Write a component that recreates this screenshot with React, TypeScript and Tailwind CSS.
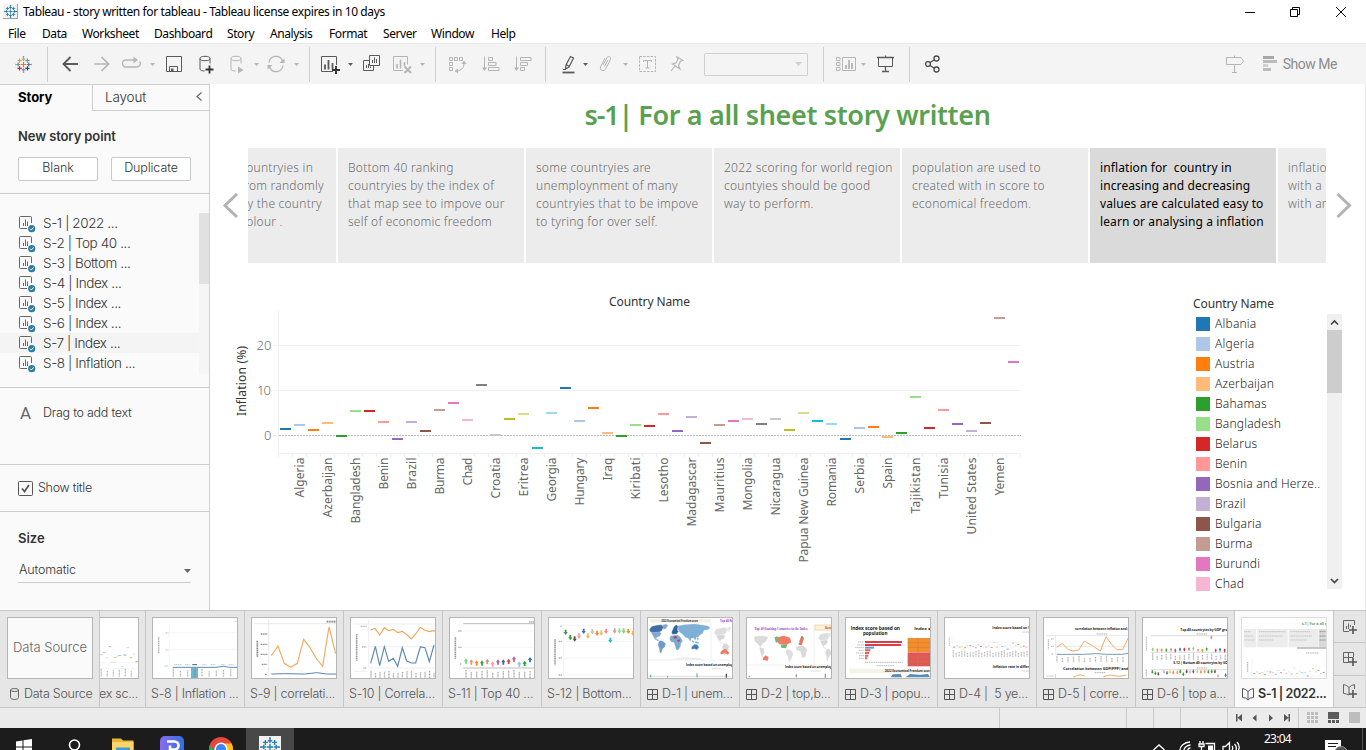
import React from "react";

type Kids = { children?: React.ReactNode };

const UI = "font-['Inter',sans-serif]";
const NOTO = "font-['Noto_Sans',sans-serif]";

const PALETTE = [
  "#1f77b4", "#aec7e8", "#ff7f0e", "#ffbb78", "#2ca02c", "#98df8a", "#d62728", "#ff9896", "#9467bd", "#c5b0d5",
  "#8c564b", "#c49c94", "#e377c2", "#f7b6d2", "#7f7f7f", "#c7c7c7", "#bcbd22", "#dbdb8d", "#17becf", "#9edae5",
];

/* ---------- title bar and menu ---------- */

function Sparkle({ size, colors }: { size: number; colors: string[] }) {
  const pts: [number, number, number][] = [
    [8, 8, 2.6], [8, 3, 1.8], [8, 13, 1.8], [3, 8, 1.8], [13, 8, 1.8],
    [4.3, 4.3, 2], [11.7, 4.3, 2], [4.3, 11.7, 2], [11.7, 11.7, 2],
    [8, 0.8, 0.7], [8, 15.2, 0.7], [0.8, 8, 0.7], [15.2, 8, 0.7],
  ];
  return (
    <svg width={size} height={size} viewBox="0 0 16 16" className="shrink-0">
      {pts.map(([x, y, r], i) => (
        <path key={i} d={`M${x - r} ${y}h${r * 2}M${x} ${y - r}v${r * 2}`} stroke={colors[i % colors.length]} strokeWidth="1.1" />
      ))}
    </svg>
  );
}

function TitleBar() {
  return (
    <div className="flex h-[23px] shrink-0 items-center bg-white">
      <div className="ml-[3px] flex h-[15px] w-[15px] items-center justify-center border-r border-b border-gray-400 bg-[#f2f2f2]">
        <Sparkle size={13} colors={["#2f7fb0"]} />
      </div>
      <span className={`${NOTO} ml-[5px] whitespace-pre text-[12px] tracking-[-0.39px] text-black`}>
        Tableau - story written for tableau - Tableau license expires in 10 days
      </span>
      <svg className="ml-auto mr-[18px]" width="104" height="14" viewBox="0 0 104 14" fill="none" stroke="#000">
        <path d="M1 7.500h10M46.500 4.500h7v7h-7zM48.500 4.500v-2h7v7h-2M92 2l10 10M102 2l-10 10" />
      </svg>
    </div>
  );
}

function MenuBar() {
  const item = "shrink-0";
  return (
    <div className={`${NOTO} flex h-5 shrink-0 items-center bg-white pt-[2px] text-[12px] tracking-[-0.42px] text-black`}>
      <span className={`${item} ml-2 w-[34px]`}>File</span>
      <span className={`${item} w-[40px]`}>Data</span>
      <span className={`${item} w-[72px]`}>Worksheet</span>
      <span className={`${item} w-[73px]`}>Dashboard</span>
      <span className={`${item} w-[43px]`}>Story</span>
      <span className={`${item} w-[59px]`}>Analysis</span>
      <span className={`${item} w-[54px]`}>Format</span>
      <span className={`${item} w-[48px]`}>Server</span>
      <span className={`${item} w-[60px]`}>Window</span>
      <span className={item}>Help</span>
    </div>
  );
}

/* ---------- toolbar ---------- */

function Tool({ w, className, color = "#b5b5b5", children }: Kids & { w: number; className: string; color?: string }) {
  return (
    <svg width={w} height="24" viewBox={`0 0 ${w} 24`} fill="none" stroke={color} strokeWidth="1" className={`shrink-0 ${className}`}>
      {children}
    </svg>
  );
}

function Caret({ className, color = "#b5b5b5" }: { className: string; color?: string }) {
  return (
    <svg width="5" height="3" viewBox="0 0 5 3" className={`shrink-0 ${className}`}>
      <path d="M0 0h5L2.500 3z" fill={color} />
    </svg>
  );
}

function Sep({ className }: { className: string }) {
  return <div className={`h-[35px] w-px shrink-0 bg-[#cfcfcf] ${className}`} />;
}

function Toolbar() {
  const dark = "#5a5a5a";
  return (
    <div className="flex h-[41px] shrink-0 items-center border-t border-[#ebebeb] bg-[#f4f4f4]">
      <div className="ml-[15px]">
        <Sparkle size={17} colors={["#e8762c", "#b9a98a", "#8b8bb8", "#5b9bb0", "#5c6f9c", "#e8a33d", "#6b9fb0", "#c72037", "#1f447e", "#5b9bb0", "#8aa0b8", "#77bbaa", "#7b9bb8"]} />
      </div>
      <Sep className="ml-[15px]" />
      <Tool w={16} className="ml-[14px]" color={dark}>
        <path d="M8.500 5L1.500 12l7 7M1.500 12H16" strokeWidth="1.9" />
      </Tool>
      <Tool w={16} className="ml-[16px]">
        <path d="M7.500 5l7 7-7 7M0 12h14.500" strokeWidth="1.7" />
      </Tool>
      <Tool w={19} className="ml-[12px]">
        <path d="M12.500 8H4a3.300 3.300 0 0 0 0 7h11a3.300 3.300 0 0 0 2.500-5.500" strokeWidth="1.300" />
        <path d="M11.500 4.500l4.500 3.500-4.500 3.500z" fill="#b5b5b5" stroke="none" />
      </Tool>
      <Caret className="ml-[9px]" />
      <Tool w={16} className="ml-[11px]" color={dark}>
        <path d="M.5 4.500h15v15H.5zM3.500 19.500v-5h8v5" />
        <path d="M5 16.500h2.500V20H5z" fill={dark} stroke="none" />
      </Tool>
      <Tool w={15} className="ml-[17px]" color={dark}>
        <ellipse cx="6" cy="6.500" rx="5" ry="2.200" />
        <path d="M1 6.500V17c0 1.400 2 2 4.500 2M11 6.500v5" />
        <path d="M10.500 13.500v8M6.500 17.500h8" stroke="#333" strokeWidth="1.800" />
      </Tool>
      <Tool w={14} className="ml-[16px]">
        <ellipse cx="6" cy="6.500" rx="5" ry="2.200" />
        <path d="M1 6.500V17c0 1.400 2 2 4.500 2M11 6.500v5" />
        <path d="M8 14.500l5.500 3.500L8 21.500z" fill="#b5b5b5" stroke="none" />
      </Tool>
      <Caret className="ml-[10px]" />
      <Tool w={18} className="ml-[8px]">
        <path d="M2 10.500a7 7 0 0 1 13.500-1.500M16 13.500a7 7 0 0 1-13.500 1.500" strokeWidth="1.300" />
        <path d="M17.500 6.500v4.500H12.500zM.5 17.500V13H5.500z" fill="#b5b5b5" stroke="none" />
      </Tool>
      <Caret className="ml-[9px]" />
      <Sep className="ml-[10px]" />
      <Tool w={20} className="ml-[11px]" color={dark}>
        <path d="M15.500 13V4.500H.5v15H12" />
        <path d="M4 12.500v5M7.500 8v9.500M11.500 11v6.500" strokeWidth="1.800" />
        <path d="M15 14v8M11 18h8" stroke="#333" strokeWidth="1.900" />
      </Tool>
      <Caret className="ml-[7px]" color={dark} />
      <Tool w={18} className="ml-[10px]" color={dark}>
        <path d="M6.500 3.500h10v10h-10zM6.500 8.500h-6v10h10v-5" />
        <path d="M9.500 8v3M11.500 5.500V11M13.500 7v4M3.500 13v3M5.500 12v4M7.500 14.500V16" />
      </Tool>
      <Tool w={19} className="ml-[12px]">
        <path d="M14.500 12.500V4.500H.5v14H10" />
        <path d="M4 12v4.500M7.500 7.500v9M11.500 10v4" strokeWidth="1.600" />
        <path d="M11.500 14.500l6.500 6.500M18 14.500L11.500 21" strokeWidth="1.900" />
      </Tool>
      <Caret className="ml-[8px]" />
      <Sep className="ml-[10px]" />
      <Tool w={18} className="ml-[13px]">
        <path d="M.5 5.500h3v3h-3zM5.500 5.500h3v3h-3zM10.500 5.500h3v3h-3zM.5 10.500h3v3h-3zM.5 15.500h3v3h-3zM15 11.500c0 4-2.500 7-7 7.500" />
        <path d="M15 8.500l2.500 3.500h-5zM5.500 19l3.500-2.500v5z" fill="#b5b5b5" stroke="none" />
      </Tool>
      <Tool w={19} className="ml-[14px]">
        <path d="M3.500 4.500V17M7.500 5.500h4v3h-4zM7.500 10.500h7.500v3H7.500zM7.500 15.500h10.500v3H7.500z" />
        <path d="M1 15.500h5L3.500 19z" fill="#b5b5b5" stroke="none" />
      </Tool>
      <Tool w={19} className="ml-[13px]">
        <path d="M3.500 4.500V17M7.500 5.500h10.500v3H7.500zM7.500 10.500h7v3h-7zM7.500 15.500h4v3h-4z" />
        <path d="M1 15.500h5L3.500 19z" fill="#b5b5b5" stroke="none" />
      </Tool>
      <Sep className="ml-[13px]" />
      <Tool w={13} className="ml-[16px]" color={dark}>
        <path d="M8.500 4.500l3 1.500-4.500 9-3.500 2 .500-4zM4 12.500l3.500 2M1 17.500h3" strokeWidth="1.200" />
        <path d="M.5 20.500h12" strokeWidth="1.800" />
      </Tool>
      <Caret className="ml-[8px]" color={dark} />
      <Tool w={13} className="ml-[11px]">
        <path d="M4 13l4-7.500c1.500-2 4.500-.5 3.500 2l-5 9.500c-1.500 3-6 1.500-5-2l4.500-9M5.500 14.500L9 8" />
      </Tool>
      <Caret className="ml-[11px]" />
      <Tool w={17} className="ml-[11px]">
        <path d="M.5 4.500h16v15H.5z" strokeDasharray="2.500 1.200" />
        <path d="M4.500 10V8.500h8V10M8.500 8.500v7.500M6.500 16h4" />
      </Tool>
      <Tool w={14} className="ml-[14px]">
        <path d="M6.500 4.500l6.500 4-2.500.5-2 4.500 1.500 3.500-7.500-5 3.500-1 2-4zM5 14l-4 5" strokeWidth="1.100" />
      </Tool>
      <div className="ml-[20px] flex h-[23px] w-[104px] shrink-0 items-center justify-end rounded-xs border border-[#d0d0d0] pr-[5px]">
        <svg width="7" height="4" viewBox="0 0 7 4"><path d="M0 0h7L3.500 4z" fill="#cfcfcf" /></svg>
      </div>
      <Sep className="ml-[15px]" />
      <Tool w={20} className="ml-[12px]">
        <path d="M.5 5.500h3.500v3H.5zM.5 10.500h3.500v3H.5zM.5 15.500h3.500v3H.5zM6.500 5.500h13v13h-13z" />
        <path d="M10 13v4M13 8v9M16 11v6" strokeWidth="1.800" />
      </Tool>
      <Caret className="ml-[5px]" />
      <Tool w={17} className="ml-[11px]" color={dark}>
        <path d="M0 5.500h17M8.500 3.500v2M8.500 14.500v5M5 19.500h7" strokeWidth="1.300" />
        <path d="M1.500 5.500v9h14v-9" />
      </Tool>
      <Sep className="ml-[15px]" />
      <Tool w={15} className="ml-[15px]" color="#4a4a4a">
        <circle cx="11.500" cy="6.500" r="2.500" strokeWidth="1.300" />
        <circle cx="3" cy="12" r="2.400" strokeWidth="1.300" />
        <circle cx="11.500" cy="17.500" r="2.500" strokeWidth="1.300" />
        <path d="M5 10.500l4.500-2.800M5 13.500l4.500 2.800" strokeWidth="1.300" />
      </Tool>
      <Tool w={18} className="ml-auto">
        <path d="M.5 5.500H15l2.500 3.500L15 12.500H.5zM8.500 3.500v2M8.500 12.500v8M6 20.500h5" />
      </Tool>
      <Tool w={14} className="ml-[19px]">
        <path d="M0 5.500h11" stroke="#a8a8a8" strokeWidth="3" />
        <path d="M0 9.500h14M0 17.500h8" stroke="#bbb" strokeWidth="3" />
        <path d="M0 13.500h5" stroke="#d0d0d0" strokeWidth="3" />
      </Tool>
      <span className="mr-[29px] ml-[6px] whitespace-nowrap font-['Roboto',sans-serif] text-[14px] tracking-[-0.48px] text-[#8c8c8c]">Show Me</span>
    </div>
  );
}

/* ---------- story side panel ---------- */

function SheetIcon() {
  return (
    <svg width="17" height="17" viewBox="0 0 17 17" fill="none" stroke="#666" className="mt-[2px] shrink-0">
      <path d="M12.500 7V1.500a1 1 0 0 0-1-1h-10a1 1 0 0 0-1 1v10a1 1 0 0 0 1 1H8M4.500 7v3M6.500 3.500V10M8.500 5.500V10" />
      <circle cx="12.700" cy="12.700" r="3.600" fill="#2f7da3" stroke="none" />
      <path d="M11 12.700l1.300 1.300 2.200-2.500" stroke="#fff" />
    </svg>
  );
}

const SHEETS = ["S-1 | 2022 ...", "S-2 | Top 40 ...", "S-3 | Bottom ...", "S-4 | Index ...", "S-5 | Index ...", "S-6 | Index ...", "S-7 | Index ...", "S-8 | Inflation ..."];

function SidePanel() {
  return (
    <aside className={`${UI} flex w-[210px] shrink-0 flex-col border-t border-r border-[#d0d0d0] bg-[#fafafa] text-[#333]`}>
      <div className="flex h-[26px] shrink-0">
        <div className="w-[92px] pt-[3px] pl-[18px] text-[13px] font-bold text-black">Story</div>
        <div className="flex flex-1 justify-between border-b border-l border-[#cfcfcf] pt-[3px] pr-[7px] pl-[12px] text-[13.500px] leading-[19px] font-light tracking-[-0.15px]">
          Layout
          <svg width="6" height="9" viewBox="0 0 6 9" className="mt-[4px]"><path d="M5.500.5l-4.500 4 4.500 4" fill="none" stroke="#666" strokeWidth="1.200" /></svg>
        </div>
      </div>
      <div className="h-[83px] shrink-0 border-b border-[#cdcdcd] pl-[18px]">
        <div className="mt-[15px] text-[13px] leading-5 font-semibold tracking-[-0.1px]">New story point</div>
        <div className="mt-[11px] flex gap-[13px]">
          <div className="flex h-6 w-[80px] items-center justify-center rounded-xs border border-[#c9c9c9] bg-white pb-px text-[12.500px] font-light tracking-[-0.1px]">Blank</div>
          <div className="flex h-6 w-[80px] items-center justify-center rounded-xs border border-[#c9c9c9] bg-white pb-px text-[12.500px] font-light tracking-[-0.1px]">Duplicate</div>
        </div>
      </div>
      <div className="flex h-[194px] shrink-0 border-b border-[#cdcdcd] pt-[19px]">
        <div className="flex-1">
          {SHEETS.map((s, i) => (
            <div key={s} className={`flex h-5 items-center pl-[19px] text-[13.500px] font-light tracking-[-0.4px] ${i === 6 ? "bg-[#f4f4f4]" : ""}`}>
              <SheetIcon />
              <span className="ml-[7px] whitespace-nowrap">{s}</span>
            </div>
          ))}
        </div>
        <div className="h-[161px] w-[10px] bg-[#f5f5f5]">
          <div className="h-[71px] bg-[#e1e1e1]" />
        </div>
      </div>
      <div className="flex h-[77px] shrink-0 border-b border-[#cdcdcd] pt-[15px] pl-[20px] text-[12.500px] leading-5 font-light tracking-[-0.25px]">
        <span className="w-[23px] font-['Roboto',sans-serif] text-[17px] font-normal text-[#666]">A</span>
        Drag to add text
      </div>
      <div className="flex h-[47px] shrink-0 items-center border-b border-[#cdcdcd] pl-[18px] text-[12.500px] font-light tracking-[-0.28px]">
        <svg width="15" height="15" viewBox="0 0 15 15" fill="none" stroke="#555" className="mr-[5px]">
          <rect x=".5" y=".5" width="14" height="14" rx="1" />
          <path d="M4 7.500l2.500 3L11 4" strokeWidth="1.700" />
        </svg>
        Show title
      </div>
      <div className="pt-[16px] pl-[18px]">
        <div className="text-[13px] leading-5 font-semibold">Size</div>
        <div className="mt-[11px] flex h-[24px] w-[173px] items-center justify-between border-b border-[#cdcdcd] pl-px text-[12.500px] font-light tracking-[-0.15px]">
          Automatic
          <svg width="7" height="4" viewBox="0 0 7 4"><path d="M0 0h7L3.500 4z" fill="#666" /></svg>
        </div>
      </div>
    </aside>
  );
}

/* ---------- story points ---------- */

const POINTS = [
  "Bottom 40 ranking\ncountryies by the index of\nthat map see to impove our\nself of economic freedom",
  "some countryies are\nunemploynment of many\ncountryies that to be impove\nto tyring for over self.",
  "2022 scoring for world region\ncountyies should be good\nway to perform.",
  "population are used to\ncreated with in score to\neconomical freedom.",
  "inflation for  country in\nincreasing and decreasing\nvalues are calculated easy to\nlearn or analysing a inflation",
];

function StoryPoints() {
  return (
    <div className="flex h-[115px] shrink-0 items-center">
      <svg width="38" height="26" viewBox="0 0 38 26" className="shrink-0"><path d="M27 1L15 12.500 27 24" fill="none" stroke="#b3b3b3" strokeWidth="3" /></svg>
      <div className={`${NOTO} flex h-full w-[1078px] gap-[2px] overflow-hidden whitespace-pre text-[12px] leading-[18px] font-light tracking-[0.24px] text-[#6c6c6c]`}>
        <div className="flex w-[88px] shrink-0 justify-end overflow-hidden bg-[#ececec] pt-[11px] pr-[12px]">
          <div>{"countryies in\nfrom randomly\nby the country\ncolour ."}</div>
        </div>
        {POINTS.map((p, i) => (
          <div key={i} className={`w-[186px] shrink-0 pt-[11px] pl-[10px] ${i === 4 ? "bg-[#dadada] font-normal tracking-[0.1px] text-black" : "bg-[#ececec]"}`}>{p}</div>
        ))}
        <div className="w-[48px] shrink-0 overflow-hidden bg-[#ececec] pt-[11px] pl-[10px]">{"inflation\nwith a\nwith any"}</div>
      </div>
      <svg width="38" height="26" viewBox="0 0 38 26" className="shrink-0"><path d="M11.500 1l12 11.500L11.500 24" fill="none" stroke="#b3b3b3" strokeWidth="3" /></svg>
    </div>
  );
}

/* ---------- inflation chart: mark heights in pixels below the panel top ---------- */

const MARKS = [
  144, 140, 145, 138, 151, 126, 126, 137, 154, 137, 146, 125, 118, 135, 100, 150, 134, 129, 163, 128, 103, 136, 123, 148, 151, 140, 141,
  129, 146, 132, 158, 140, 136, 134, 139, 134, 145, 128, 136, 139, 154, 143, 142, 152, 148, 112, 143, 125, 139, 146, 138, 33, 77,
];

const LABELS: [string, number][] = [
  ["Algeria", 40], ["Azerbaijan", 60], ["Bangladesh", 66], ["Benin", 32], ["Brazil", 32], ["Burma", 37], ["Chad", 28], ["Croatia", 41],
  ["Eritrea", 39], ["Georgia", 44], ["Hungary", 48], ["Iraq", 23], ["Kiribati", 42], ["Lesotho", 45], ["Madagascar", 69], ["Mauritius", 55],
  ["Mongolia", 53], ["Nicaragua", 58], ["Papua New Guinea", 105], ["Romania", 49], ["Serbia", 36], ["Spain", 31], ["Tajikistan", 56],
  ["Tunisia", 41], ["United States", 77], ["Yemen", 38],
];

function InflationChart() {
  return (
    <svg width="830" height="320" viewBox="210 0 830 320" className={`${NOTO} shrink-0`} fontSize="12">
      <text x="609" y="21" textLength="81" fontSize="12" fill="#333">Country Name</text>
      <text transform="translate(246 131) rotate(-90)" textLength="70" fill="#333">Inflation (%)</text>
      <g stroke="#f0f0f0">
        <path d="M278.500 26v145M273 60.500h748M273 105.500h748M273 150.500h5M278 168.500h743" />
        <path d={Array.from({ length: 54 }, (_, i) => `M${278.5 + 14 * i} 168v4`).join("")} />
      </g>
      <path d="M279 150.500h742" stroke="#bbb" strokeDasharray="2 1" />
      <g fill="#6c6c6c" fontWeight="300" fontSize="13">
        <text x="256.500" y="65" textLength="15">20</text>
        <text x="257" y="110" textLength="14">10</text>
        <text x="264" y="155">0</text>
      </g>
      {MARKS.map((y, i) => (
        <rect key={i} x={280 + 14 * i} y={y - 1} width="11" height="2" fill={PALETTE[i % 20]} />
      ))}
      <g fill="#666" fontSize="12">
        {LABELS.map(([name, len], i) => (
          <text key={name} transform={`translate(${303.5 + 28 * i} ${172.5 + len}) rotate(-90)`} textLength={len}>{name}</text>
        ))}
      </g>
    </svg>
  );
}

const LEGEND = ["Albania", "Algeria", "Austria", "Azerbaijan", "Bahamas", "Bangladesh", "Belarus", "Benin", "Bosnia and Herze..", "Brazil", "Bulgaria", "Burma", "Burundi", "Chad"];

function Legend() {
  return (
    <div className={`${NOTO} mt-[9px] ml-[153px] w-[149px] shrink-0`}>
      <div className="text-[12px] leading-5 tracking-[-0.1px] text-[#333]">Country Name</div>
      <div className="flex">
        <div className="w-[134px] pl-[3px]">
          {LEGEND.map((n, i) => (
            <div key={n} className="flex h-5 items-center gap-[5px] text-[12px] font-light tracking-[0.2px] whitespace-nowrap text-[#222]">
              <span className="h-[14px] w-[14px] shrink-0" style={{ background: PALETTE[i] }} />
              {n}
            </div>
          ))}
        </div>
        <div className="flex h-[275px] w-[15px] flex-col bg-[#f0f0f0]">
          <svg width="15" height="16" viewBox="0 0 15 16"><path d="M4 10.500L7.500 7l3.500 3.500" fill="none" stroke="#444" strokeWidth="1.700" /></svg>
          <div className="h-[63px] bg-[#cdcdcd]" />
          <svg width="15" height="16" viewBox="0 0 15 16" className="mt-auto"><path d="M4 6l3.500 3.500L11 6" fill="none" stroke="#444" strokeWidth="1.700" /></svg>
        </div>
      </div>
    </div>
  );
}

/* ---------- sheet thumbnails ---------- */

function Thumb({ x, w = 84, active = false, children }: Kids & { x: number; w?: number; active?: boolean }) {
  return (
    <div className={`h-[62px] shrink-0 overflow-hidden border-y border-r bg-white ${w === 84 ? "border-l" : ""} ${active ? "border-[#ddd]" : "border-[#b5b5b5]"}`}>
      <svg width={w} height="60" viewBox={`${x} 40 ${w * 3} 180`} fill="none" className="font-['Open_Sans',sans-serif] font-bold">{children}</svg>
    </div>
  );
}

function VTicks({ from, to, step, y, h = 24, color = "#999" }: { from: number; to: number; step: number; y: number; h?: number; color?: string }) {
  const n = Math.floor((to - from) / step) + 1;
  return (
    <g stroke={color} strokeWidth="4" strokeDasharray="3 1.500" opacity=".5">
      {Array.from({ length: n }, (_, i) => (
        <path key={i} d={`M${from + i * step} ${y + ((i * 7) % 9)}v${h - ((i * 7) % 9)}`} />
      ))}
    </g>
  );
}

/* a word too small to read, drawn as a dashed line */
function Smudge({ d, color = "#999", w = 4 }: { d: string; color?: string; w?: number }) {
  return <path d={d} stroke={color} strokeWidth={w} strokeDasharray="4 1.500" opacity=".6" />;
}

function Dashes({ pts, w = 7, off = 0 }: { pts: [number, number][]; w?: number; off?: number }) {
  return (
    <g>
      {pts.map(([x, y], i) => (
        <rect key={i} x={x} y={y} width={w} height="2.5" fill={PALETTE[(i + off) % 20]} opacity=".7" />
      ))}
    </g>
  );
}

function Arrows({ pts, down = false, colors, k = 0.9 }: { pts: [number, number][]; down?: boolean; colors: string[]; k?: number }) {
  const d = down ? "M-3-9h6v8h4L0 9-7-1h4z" : "M-3 9h6V1h4L0-9-7 1h4z";
  return (
    <g>
      {pts.map(([x, y], i) => (
        <path key={i} transform={`translate(${x} ${y}) scale(${k})`} d={d} fill={colors[i % colors.length]} />
      ))}
    </g>
  );
}

const ARROWS = ["#7bd878", "#ff8c82", "#f28e2b", "#3aa63a", "#c9948b", "#ff9896", "#b6609b", "#3a6ea5", "#d64545", "#b6609b", "#8fc6e8", "#2ca02c", "#1f77b4"];

function WorldMap({ transform, fills, line }: { transform: string; fills: string[]; line: string }) {
  const [na, usa, sa, eu, af, asia, aus] = fills;
  return (
    <g transform={transform} stroke={line} strokeWidth=".8">
      <path d="M4 16l8-9 14-3 14-2 6 8-5 10-7 4-22 2-6-4z" fill={na} />
      <path d="M42 4l12-4 6 4-6 10-7 2z" fill={na} opacity=".6" />
      <path d="M10 26l24-2 6 4-5 9-8 2-3 5-8-7z" fill={usa} />
      <path d="M16 38l8 7 9 4-3 2-10-6z" fill={sa} />
      <path d="M34 50l10 1 9 8-3 10-7 6-3 11-4 1-2-14-4-11z" fill={sa} />
      <path d="M72 22l6-14 7-6 5 5-2 12 4 3-6 8-12 1-3-4z" fill={eu} />
      <path d="M68 36l20-3 9 6 7 12-5 6-2 11-7 10-5-1-4-14-3-8-9-2-4-8z" fill={af} />
      <path d="M90 6l20-4 30-2 40 6 6 5-6 6-12 1-4 10-8 4-6 8-5-1-3 10-5-8-7 2-3 9-6-9-9-3-8-9-8-6-5-8z" fill={asia} />
      <path d="M132 50l6 5M142 54l10 3M148 42l3 5" stroke={asia} strokeWidth="4" />
      <path d="M131 68l9-7 8 1 5 8-6 7-8-3-8 2z" fill={aus} />
    </g>
  );
}

const GREYS = ["#ddd", "#d6d6d6", "#d9d9d9", "#e0e0e0", "#dcdcdc", "#d9d9d9", "#d5d5d5"];

const WAVE: [number, number][] = [[0, 12], [8, 8], [16, 12], [24, 9], [32, 14], [40, 6], [48, 8], [56, 10], [64, 14], [72, 4], [80, 10], [88, 3], [96, 12], [104, 8], [112, 13], [120, -2], [128, 12], [136, 6], [144, 10], [152, 9], [160, 18], [168, 6], [176, 0], [184, 8], [192, 4], [200, 12], [208, 9], [216, 12]];

function at(x: number, y: number, k = 1): [number, number][] {
  return WAVE.map(([a, b]) => [x + a, y + b * k]);
}

const thumbs: Record<string, React.ReactNode> = {
  s7: (
    <Thumb x={302} w={38}>
      <path d="M300 174h115M300 192h115" stroke="#eee" strokeWidth="2" />
      <Dashes off={11} w={8} pts={[[302, 149], [310, 142], [319, 158], [328, 125], [337, 171], [344, 157], [350, 153], [357, 151], [364, 184], [373, 150], [381, 128], [391, 158], [399, 147], [408, 170]]} />
      <VTicks from={306} to={410} step={18} y={192} color="#777" />
    </Thumb>
  ),
  s8: (
    <Thumb x={459}>
      <path d="M508 60v128M508 84h202M508 134h202" stroke="#f3f3f3" strokeWidth="2" />
      <Smudge d="M476 98v48" color="#777" />
      <Smudge d="M497 85h8M497 136h8M494 184h10M706 50h6" color="#888" w={3} />
      <Smudge d="M522 180h24M555 180h14M607 180h12M632 180h14M664 180h12M686 180h14" color="#aaa" />
      <rect x="573" y="190" width="21" height="32" fill="#6db7cf" />
      <path d="M518 188h130l22-3 20 3h22" stroke="#5b8db5" strokeWidth="3" />
      <VTicks from={520} to={700} step={21.5} y={192} color="#666" />
      <path d="M577 180h14" stroke="#555" strokeWidth="3" />
    </Thumb>
  ),
  s9: (
    <Thumb x={756}>
      <path d="M806 46v170M762 57h246" stroke="#ddd" strokeWidth="2" />
      <Smudge d="M772 108v50M980 51h28" color="#333" w={5} />
      <Smudge d="M782 88h20M782 119h20M782 149h20M785 179h17M795 209h6" color="#444" />
      <path d="M814 153l20-29 19 52 19 12 20-12 19-72 19 25 20 34 18 22 19-118 20 80" stroke="#f2ab64" strokeWidth="3.500" />
      <path d="M814 208l40-1 60 1 36-4 30 4h30" stroke="#5b84b1" strokeWidth="3" />
    </Thumb>
  ),
  s10: (
    <Thumb x={1053}>
      <path d="M1106 45v145M1060 58h250M1106 126h202M1106 190h202M1062 200h40" stroke="#e6e6e6" strokeWidth="2" />
      <Smudge d="M1070 88v80" color="#555" w={5} />
      <Smudge d="M1082 65h18M1086 127h13M1090 190h9" color="#888" />
      <path d="M1112 76l13-5 14 20 14-22 13 9 14-4 13 10 14-4 13 10 14 13 13-15 14-20 13 9 14 4 13-3 14 3" stroke="#f2a65a" strokeWidth="3.500" />
      <path d="M1112 176l14-51 13 58 14-57 13 44 14-9 13 24 14-56 13 40 14 6h13l14-48 14 2 13 42 14-50" stroke="#5f88b3" strokeWidth="3.500" />
      <VTicks from={1113} to={1306} step={13.5} y={198} color="#555" />
    </Thumb>
  ),
  s11: (
    <Thumb x={30}>
      <path d="M70 57h214M68 190h216" stroke="#bbb" strokeWidth="3" />
      <path d="M70 80h214M70 128h214M70 178h214" stroke="#f2f2f2" strokeWidth="2" />
      <Smudge d="M46 98v64" color="#555" w={5} />
      <Smudge d="M55 79h10M55 128h10M60 178h5M267 52h20" color="#777" />
      <Arrows colors={ARROWS} pts={[[78, 169], [94, 172], [110, 175], [126, 175], [142, 170], [158, 178], [174, 172], [190, 172], [206, 170], [222, 163], [238, 178], [254, 176], [270, 165]]} />
      <VTicks from={78} to={272} step={16} y={196} color="#555" />
    </Thumb>
  ),
  s12: (
    <Thumb x={327}>
      <path d="M370 58v156M362 62h220M370 110h210M370 160h210M370 211h210" stroke="#eee" strokeWidth="2" />
      <Smudge d="M345 104v78" color="#555" w={5} />
      <Smudge d="M361 65h5M356 110h10M356 160h10M356 211h10" color="#777" />
      <Arrows down colors={["#3a9a3a", "#2ca02c", "#6b4c4c", "#f3a0a8", "#3f6fa8", "#eec24a", "#c7c0c0", "#f28e2b", "#f0c04f", "#ff8c82", "#17becf", "#c9a49c", "#98df8a", "#7bd878", "#f28e2b", "#f2b26a"]} pts={[[377, 83], [391, 99], [404, 103], [417, 94], [431, 80], [444, 94], [457, 81], [471, 86], [484, 85], [498, 80], [511, 107], [524, 79], [538, 79], [551, 79], [565, 80], [579, 86]]} />
    </Thumb>
  ),
  d1: (
    <Thumb x={624}>
      <rect x="630" y="43" width="182" height="11" fill="#f3f0e6" />
      <text x="664" y="52" textLength="110" lengthAdjust="spacingAndGlyphs" fontSize="9" fill="#333">2022 Economical Freedom score</text>
      <text x="840" y="52" textLength="62" lengthAdjust="spacingAndGlyphs" fontSize="9" fill="#9b45c0">Top 40 Ranking</text>
      <WorldMap transform="translate(624 58)" fills={["#3f6fa5", "#7ea8cf", "#6c9cc9", "#2f639c", "#7aa9d2", "#7fb0d8", "#3f7fb8"]} line="#9dbbd6" />
      <path d="M700 96l8-2 3 6-8 2zM712 106l6-2 2 6-7 1z" fill="#c33a4a" />
      <path d="M813 54v112M624 166h252" stroke="#e8e8e8" strokeWidth="2" />
      <WorldMap transform="translate(818 66) scale(.95 1)" fills={GREYS} line="#fff" />
      <path d="M840 145l8-10 10-2 10 12-4 5-10-4-10 3z" fill="#f07b67" />
      <path d="M690 164l40-6 50 2 10 6z" fill="#ececec" />
      <text x="738" y="184" textLength="180" lengthAdjust="spacingAndGlyphs" fontSize="10" fill="#222">Index score based on unemploynment of</text>
      <path d="M815 192h28M624 215h250" stroke="#ccc" strokeWidth="2" />
      <path d="M771 206v12M683 214v5M632 210v8" stroke="#5a8" strokeWidth="3" />
      <path d="M859 207v12" stroke="#555" strokeWidth="4" />
    </Thumb>
  ),
  d2: (
    <Thumb x={921}>
      <text x="943" y="75" textLength="160" lengthAdjust="spacingAndGlyphs" fontSize="10" fill="#a74cc6" className="font-['Liberation_Serif',serif]">Top 40 Ranking Countries in the Index</text>
      <rect x="1125" y="61" width="60" height="15" fill="#fdf3dd" stroke="#e8c98c" strokeWidth="2" />
      <text x="1155" y="72" fontSize="9" fill="#c75b4a">Bottom</text>
      <path d="M943 96l24-3 18 4-8 14-8 4-8 12-8-10-10-8zM958 128l12 3 4 12-8 16-5-16z" fill="#dadada" />
      <path d="M969 160l8-8 9 6-3 10-14-2z" fill="#f07b67" />
      <path d="M1014 97l18-4 18 6 4 14-16 8-22-4-8-12z" fill="#f07b67" />
      <path d="M1003 98l10-3 3 14-8 6zM1022 119l20 2-4 10-14-2z" fill="#72b974" />
      <path d="M1078 110l6-16 8 6-6 20-7 2z" fill="#e57768" />
      <path d="M1082 102l4-8 5 4zM1075 114l6 2-2 6z" fill="#57a65c" />
      <path d="M1040 132l14 6 6 10-6 14-7 12-3-18-6-12z" fill="#dedede" />
      <path d="M1068 126l20-4 14 12-6 22-9 4-6-20-12-4z" fill="#dadada" />
      <WorldMap transform="translate(1132 82) scale(.8 1)" fills={GREYS} line="#fff" />
      <path d="M1122 60v120M921 181h252" stroke="#e8e8e8" strokeWidth="2" />
      <text x="1035" y="191" textLength="180" lengthAdjust="spacingAndGlyphs" fontSize="10" fill="#222">Index score based on unemploynment of</text>
      <path d="M1112 199h30" stroke="#ccc" strokeWidth="2" />
      <path d="M1069 209v9M1156 207v12M928 213v5" stroke="#999" strokeWidth="4" />
    </Thumb>
  ),
  d3: (
    <Thumb x={1218}>
      <text x="1232" y="75" textLength="148" lengthAdjust="spacingAndGlyphs" fontSize="13" fill="#222">Index score based on</text>
      <text x="1269" y="92" textLength="73" lengthAdjust="spacingAndGlyphs" fontSize="13" fill="#222">population</text>
      <text x="1423" y="75" textLength="120" lengthAdjust="spacingAndGlyphs" fontSize="11" fill="#222">Index score based</text>
      <path d="M1275 112h111M1275 121h108" stroke="#dc3b48" strokeWidth="6" />
      <path d="M1275 129h27" stroke="#5d9fd0" strokeWidth="6" />
      <path d="M1275 137h16M1275 145h12M1275 153h10M1275 161h7" stroke="#ee6055" strokeWidth="6" />
      <Smudge d="M1254 112h18M1252 121h20M1246 129h26M1256 137h16M1248 145h24M1258 153h14M1256 161h16M1310 183h52M1275 173h114" color="#888" w={3} />
      <rect x="1403" y="100" width="67" height="42" fill="#f28e2b" />
      <rect x="1403" y="143" width="67" height="42" fill="#e05759" />
      <path d="M1403 114h67M1403 128h67M1434 100v85M1403 157h67M1403 171h67" stroke="#c87a3a" strokeWidth="1.500" />
      <path d="M1228 192h242v14h-242z" fill="#f5f2e8" />
      <text x="1334" y="202" textLength="140" lengthAdjust="spacingAndGlyphs" fontSize="9" fill="#333">2022 Economical Freedom score</text>
      <path d="M1352 218l6-9 24-1 4 10zM1396 218l14-10 30 2 24-2 6 10z" fill="#5a8cba" />
    </Thumb>
  ),
  d4: (
    <Thumb x={135}>
      <text x="277" y="73" textLength="188" lengthAdjust="spacingAndGlyphs" fontSize="10" fill="#222">Index score based on 5 years inflation</text>
      <Smudge d="M367 82h20M367 199h20M148 98v28" w={3} />
      <path d="M156 98v34M156 112h232M156 127h232" stroke="#eee" strokeWidth="2" />
      <Dashes pts={at(160, 114)} w={6} />
      <VTicks from={160} to={386} step={8.5} y={137} h={20} color="#777" />
      <text x="278" y="190" textLength="168" lengthAdjust="spacingAndGlyphs" fontSize="10" fill="#222">Inflation rate in different country</text>
    </Thumb>
  ),
  d5: (
    <Thumb x={432}>
      <text x="525" y="77" textLength="190" lengthAdjust="spacingAndGlyphs" fontSize="10" fill="#222">correlation between inflation and unemp</text>
      <Smudge d="M590 88h32M584 204h32M445 104v30M453 103h8M453 125h8M455 148h6" color="#777" w={3} />
      <path d="M466 92v58M438 93h250M466 125h222" stroke="#ddd" strokeWidth="2" />
      <path d="M470 128l17-12 16 18 16 5 17-3 17-27 24 14 24 16 17-43 16 22 17 17h17l18-38" stroke="#f2ab64" strokeWidth="3" />
      <path d="M470 149h80l40-2 30 2h45l20-3" stroke="#5b84b1" strokeWidth="2.500" />
      <VTicks from={471} to={684} step={16.5} y={153} h={20} color="#666" />
      <text x="489" y="197" textLength="224" lengthAdjust="spacingAndGlyphs" fontSize="11" fill="#222">Correlation between GDP(PPP) and infla</text>
      <path d="M466 208v12M440 214h22" stroke="#bbb" strokeWidth="2" />
      <path d="M520 217l20-7 14 4M610 216l20-5 28 4 20-4" stroke="#f2ab64" strokeWidth="3" />
    </Thumb>
  ),
  d6: (
    <Thumb x={729}>
      <text x="841" y="79" textLength="160" lengthAdjust="spacingAndGlyphs" fontSize="11" fill="#222">Top 40 countryies by GDP growth</text>
      <Smudge d="M890 88h32M890 190h32M739 96v42M739 195v22" color="#777" w={3} />
      <path d="M752 93h232M752 143h232M752 195h232" stroke="#ccc" strokeWidth="2" />
      <Arrows k={0.6} colors={["#7bd878", "#ff8c82", "#f28e2b", "#3aa63a", "#c9948b", "#d64545", "#1f77b4", "#d62728", "#b6609b"]} pts={[[758, 134], [772, 136], [785, 136], [799, 136], [813, 135], [826, 137], [840, 134], [853, 134], [867, 133], [880, 132], [894, 136], [907, 137], [920, 133], [934, 98], [947, 137], [960, 135], [974, 137]]} />
      <VTicks from={758} to={980} step={13.6} y={146} h={20} color="#666" />
      <text x="820" y="179" textLength="206" lengthAdjust="spacingAndGlyphs" fontSize="10" fill="#222">S-12 | Bottom 40 countryies by GDP growth</text>
      <Arrows k={0.6} down colors={["#3a9a3a", "#2ca02c", "#6b4c4c", "#f3a0a8", "#3f6fa8", "#eec24a", "#f28e2b", "#ff8c82"]} pts={[[757, 202], [766, 206], [775, 208], [792, 202], [801, 205], [810, 202], [820, 204], [832, 203], [841, 201], [850, 209], [860, 201], [870, 202], [880, 201], [892, 201], [903, 202], [914, 201], [925, 202], [935, 201], [945, 201], [954, 214], [977, 212]]} />
    </Thumb>
  ),
  st1: (
    <Thumb x={1026} active>
      <text x="1205" y="60" textLength="130" lengthAdjust="spacingAndGlyphs" fontSize="12" fill="#5fa85a">s-1| For a all sheet story</text>
      <path d="M1031 73h38v55h-38zM1072 73h91v55h-91zM1166 73h88v55h-88z" fill="#ececec" />
      <path d="M1256 73h24v55h-24z" fill="#dadada" />
      <Smudge d="M1032 81h20M1032 94h28M1032 106h32M1077 81h80M1077 94h70M1077 106h44M1171 81h60M1171 94h65M1171 106h50" color="#aaa" w={3} />
      <Smudge d="M1259 81h18M1259 94h18M1259 106h18" color="#555" w={3} />
      <path d="M1191 130h90" stroke="#aaa" strokeWidth="4" />
      <Smudge d="M1218 145h38M1043 172v30" color="#777" w={3} />
      <path d="M1056 160v52M1056 214h222" stroke="#eee" strokeWidth="2" />
      <Dashes pts={at(1060, 191, 1.2)} w={6} />
    </Thumb>
  ),
};

const GridIcon = () => (
  <svg width="11" height="11" viewBox="0 0 11 11" fill="none" stroke="#555" className="mr-[5px] -ml-px shrink-0 translate-x-px"><path d="M.5.5h10v10H.5zM5.500.5v10M.5 5.500h10" /></svg>
);

const BookPath = "M6 3.500L3.500 1.500.5.5v9l3 .5L6 12l2.500-2 3-.5v-9l-3 1zM6 3.500V12";

const TABS: [string, string, string][] = [
  ["s8", "S-8 | Inflation ...", ""], ["s9", "S-9 | correlati...", ""], ["s10", "S-10 | Correla...", ""], ["s11", "S-11 | Top 40 ...", ""],
  ["s12", "S-12 | Bottom...", ""], ["d1", "D-1 | unem...", "g"], ["d2", "D-2 | top,b...", "g"], ["d3", "D-3 | popu...", "g"],
  ["d4", "D-4 |  5 ye...", "g"], ["d5", "D-5 | corre...", "g"], ["d6", "D-6 | top a...", "g"], ["st1", "S-1 | 2022...", "b"],
];

function NewButton({ children }: Kids) {
  return (
    <div className="flex flex-1 items-center justify-center border-b border-[#c6c6c6] last:border-b-0">
      <svg width="16" height="16" viewBox="0 0 16 16" fill="none" stroke="#666">
        {children}
        <path d="M11 7v8M7 11h8" stroke="#555" strokeWidth="1.600" />
      </svg>
    </div>
  );
}

function TabStrip() {
  return (
    <div className={`${UI} flex h-[98px] shrink-0 border-y border-[#c6c6c6] bg-[#e6e6e6] text-[12.500px] font-light tracking-[-0.25px] text-[#555]`}>
      <div className="flex w-[100px] shrink-0 flex-col border-r border-[#c6c6c6] pt-[6px] pl-[7px]">
        <div className="flex h-[62px] w-[86px] items-center justify-center border border-[#b5b5b5] bg-[#fafafa] text-[13px] tracking-normal whitespace-nowrap text-[#666]">Data Source</div>
        <div className="mt-[6px] flex items-center whitespace-nowrap">
          <svg width="9" height="12" viewBox="0 0 9 12" fill="none" stroke="#666" className="mr-[5px] ml-[3px] shrink-0"><ellipse cx="4.500" cy="2" rx="4" ry="1.500" /><path d="M.5 2v7.500c0 2.600 8 2.600 8 0V2" /></svg>
          Data Source
        </div>
      </div>
      <div className="flex w-[46px] shrink-0 flex-col overflow-hidden border-r border-[#c6c6c6] pt-[6px]">
        <div className="w-[39px]">{thumbs.s7}</div>
        <div className="mt-[6px] -ml-px whitespace-nowrap">ex sc...</div>
      </div>
      {TABS.map(([key, label, kind]) => (
        <div key={key} className={`flex w-[99px] shrink-0 flex-col border-r border-[#c6c6c6] pt-[6px] pl-[6px] ${kind === "b" ? "bg-[#fafafa] font-semibold tracking-[-0.4px] text-[#333]" : ""}`}>
          <div className="w-[86px]">{thumbs[key]}</div>
          <div className={`mt-[6px] flex items-center whitespace-pre ${kind === "b" ? "pl-px" : ""} ${kind === "" ? "-ml-px" : ""}`}>
            {kind === "g" && <GridIcon />}
            {kind === "b" && <svg width="12" height="13" viewBox="0 0 12 13" fill="none" stroke="#555" className="mr-[4px] shrink-0"><path d={BookPath} /></svg>}
            {label}
          </div>
        </div>
      ))}
      <div className="flex flex-1 flex-col border-r border-[#d8d8d8]">
        <NewButton><path d="M12.500 6V1.500H1.500v11H7M4.500 7v3M6.500 4.500V10M8.500 6v2" /></NewButton>
        <NewButton><path d="M11.500 6V1.500h-10v10H7M6.500 1.500v10M1.500 6.500h10" /></NewButton>
        <NewButton><path d="M12.500 6V1.500l-3 1-2.500 2-2.500-2-3-1v9l3 .5L7 12M7 4.500V12" /></NewButton>
      </div>
    </div>
  );
}

function StatusBar() {
  const cell = "shrink-0 border-r border-[#c9c9c9]";
  return (
    <div className="flex h-[20px] shrink-0 bg-[#ebebeb]">
      <div className={`${cell} w-[1000px]`} />
      <div className={`${cell} w-[127px]`} />
      <div className={`${cell} w-[27px]`} />
      <div className={`${cell} w-[27px]`} />
      <div className={`${cell} w-[47px]`} />
      <div className={`${cell} flex w-[71px] items-center pl-[7px]`}>
        <svg width="60" height="8" viewBox="0 0 60 8" fill="#555">
          <path d="M1 0h1.500v7.500H1zM7 0v7.500L2.500 3.800zM21.500 .5v7L17.500 4zM34 .5v7L38 4zM49 0v7.500l4.500-3.700zM53.500 0h1.500v7.500h-1.500z" />
        </svg>
      </div>
      <svg width="67" height="20" viewBox="0 0 67 20" fill="#bdbdbd">
        {[0, 4, 8].map((y) => [0, 4, 8].map((x) => <rect key={`${x}-${y}`} x={8 + x} y={4 + y} width="3" height="3" />))}
        <path d="M29 4h11v7H29zM29 12h3v3h-3zM33 12h3v3h-3zM37 12h3v3h-3z" fill="#5c5c5c" />
        <rect x="50" y="4" width="11" height="11" />
      </svg>
    </div>
  );
}

function Taskbar() {
  return (
    <div className="flex h-[22px] shrink-0 items-start overflow-hidden bg-[#1c1c1c]">
      <svg width="246" height="22" viewBox="0 0 246 22" className="shrink-0">
        <path d="M16 13.500l6.500-1v9.500H16zM23.500 12.300l8.500-1.300v11h-8.500z" fill="#fff" />
        <path d="M16 19h16" stroke="#1c1c1c" strokeWidth="1" />
        <circle cx="74.500" cy="17" r="5" fill="none" stroke="#fff" strokeWidth="1.600" />
        <path d="M112 10.500h9l2 2h10.500v10h-21.500z" fill="#e9b53b" /><path d="M112 14h21.500v8h-21.500z" fill="#fbd568" /><path d="M116 19.500h14v3h-14z" fill="#3f9ae0" />
        <defs><linearGradient id="pg" x1="0" x2="1"><stop offset="0" stopColor="#8a6cf0" /><stop offset="1" stopColor="#2f6fe0" /></linearGradient></defs>
        <rect x="160" y="8" width="24" height="24" rx="5" fill="url(#pg)" />
        <path d="M167 13.500h7.500a4 4 0 0 1 0 8H170v-4" fill="none" stroke="#fff" strokeWidth="2.600" />
        <circle cx="221" cy="21" r="12" fill="#e8453c" /><path d="M209.500 17.500l6.500 5h-7z" fill="#34a853" /><path d="M221 15.500h10.500a12 12 0 0 1 1.500 7h-12z" fill="#fbc116" />
        <circle cx="221" cy="21" r="6.500" fill="#fff" /><circle cx="221" cy="21" r="5" fill="#4285f4" />
      </svg>
      <div className="flex h-full w-[48px] justify-center bg-[#484848] pt-[8px]">
        <div className="h-[22px] w-[22px] bg-[#f3f3f3] p-px"><Sparkle size={20} colors={["#2f7fb0"]} /></div>
      </div>
      <svg width="98" height="22" viewBox="1150 0 98 22" fill="none" stroke="#fff" strokeWidth="1.300" className="ml-auto shrink-0">
        <path d="M1153.500 22l5.500-5 5.500 5M1180 22c0-3.500 4-8 10-8M1184 22c0-2 3-5 6.500-5M1187.500 22c.5-1 1.500-2 3-2" />
        <path d="M1205.500 15.500h9v8h-9M1199 16h5v2.500h-5zM1200 13v3M1203 13v3M1201.500 18.500V22" /><path d="M1208 17.500h5V22h-5z" fill="#fff" stroke="none" />
        <path d="M1223 22v-3.500h2.500l4-4V22M1232 18c1 1 1 3 0 4M1234.500 16c2 2 2 4.500 1.500 6M1237 14c2.500 3 2.500 6 1.500 8" />
      </svg>
      <span className={`${NOTO} ml-[16px] w-[28px] text-[12px] leading-[21px] tracking-[-0.75px] text-white`}>23:04</span>
      <svg width="74" height="22" viewBox="1292 0 74 22" className="shrink-0">
        <path d="M1325 12h16v10h-16z" fill="#fff" /><path d="M1328 15.500h10M1328 18.500h8" stroke="#1c1c1c" /><circle cx="1341" cy="25" r="6.500" fill="#555" stroke="#999" />
        <path d="M1362.500 0v22" stroke="#555" />
      </svg>
    </div>
  );
}

export default function App() {
  return (
    <div className="flex h-[750px] w-[1366px] flex-col overflow-hidden bg-white">
      <TitleBar />
      <MenuBar />
      <Toolbar />
      <div className="flex h-[526px] shrink-0">
        <SidePanel />
        <main className="flex min-w-0 flex-1 flex-col overflow-hidden border-r border-[#ececec]">
          <h1 className={`${NOTO} flex h-[64px] shrink-0 items-center justify-center pb-px text-[27px] font-semibold tracking-[-0.34px] whitespace-pre text-[#59a14f]`}>
            <span className="tracking-[-1.1px]">{"s-1| "}</span>
            For a all sheet story written
          </h1>
          <StoryPoints />
          <div className="mt-[22px] flex h-[306px] shrink-0 overflow-hidden">
            <InflationChart />
            <Legend />
          </div>
        </main>
      </div>
      <TabStrip />
      <StatusBar />
      <Taskbar />
    </div>
  );
}
